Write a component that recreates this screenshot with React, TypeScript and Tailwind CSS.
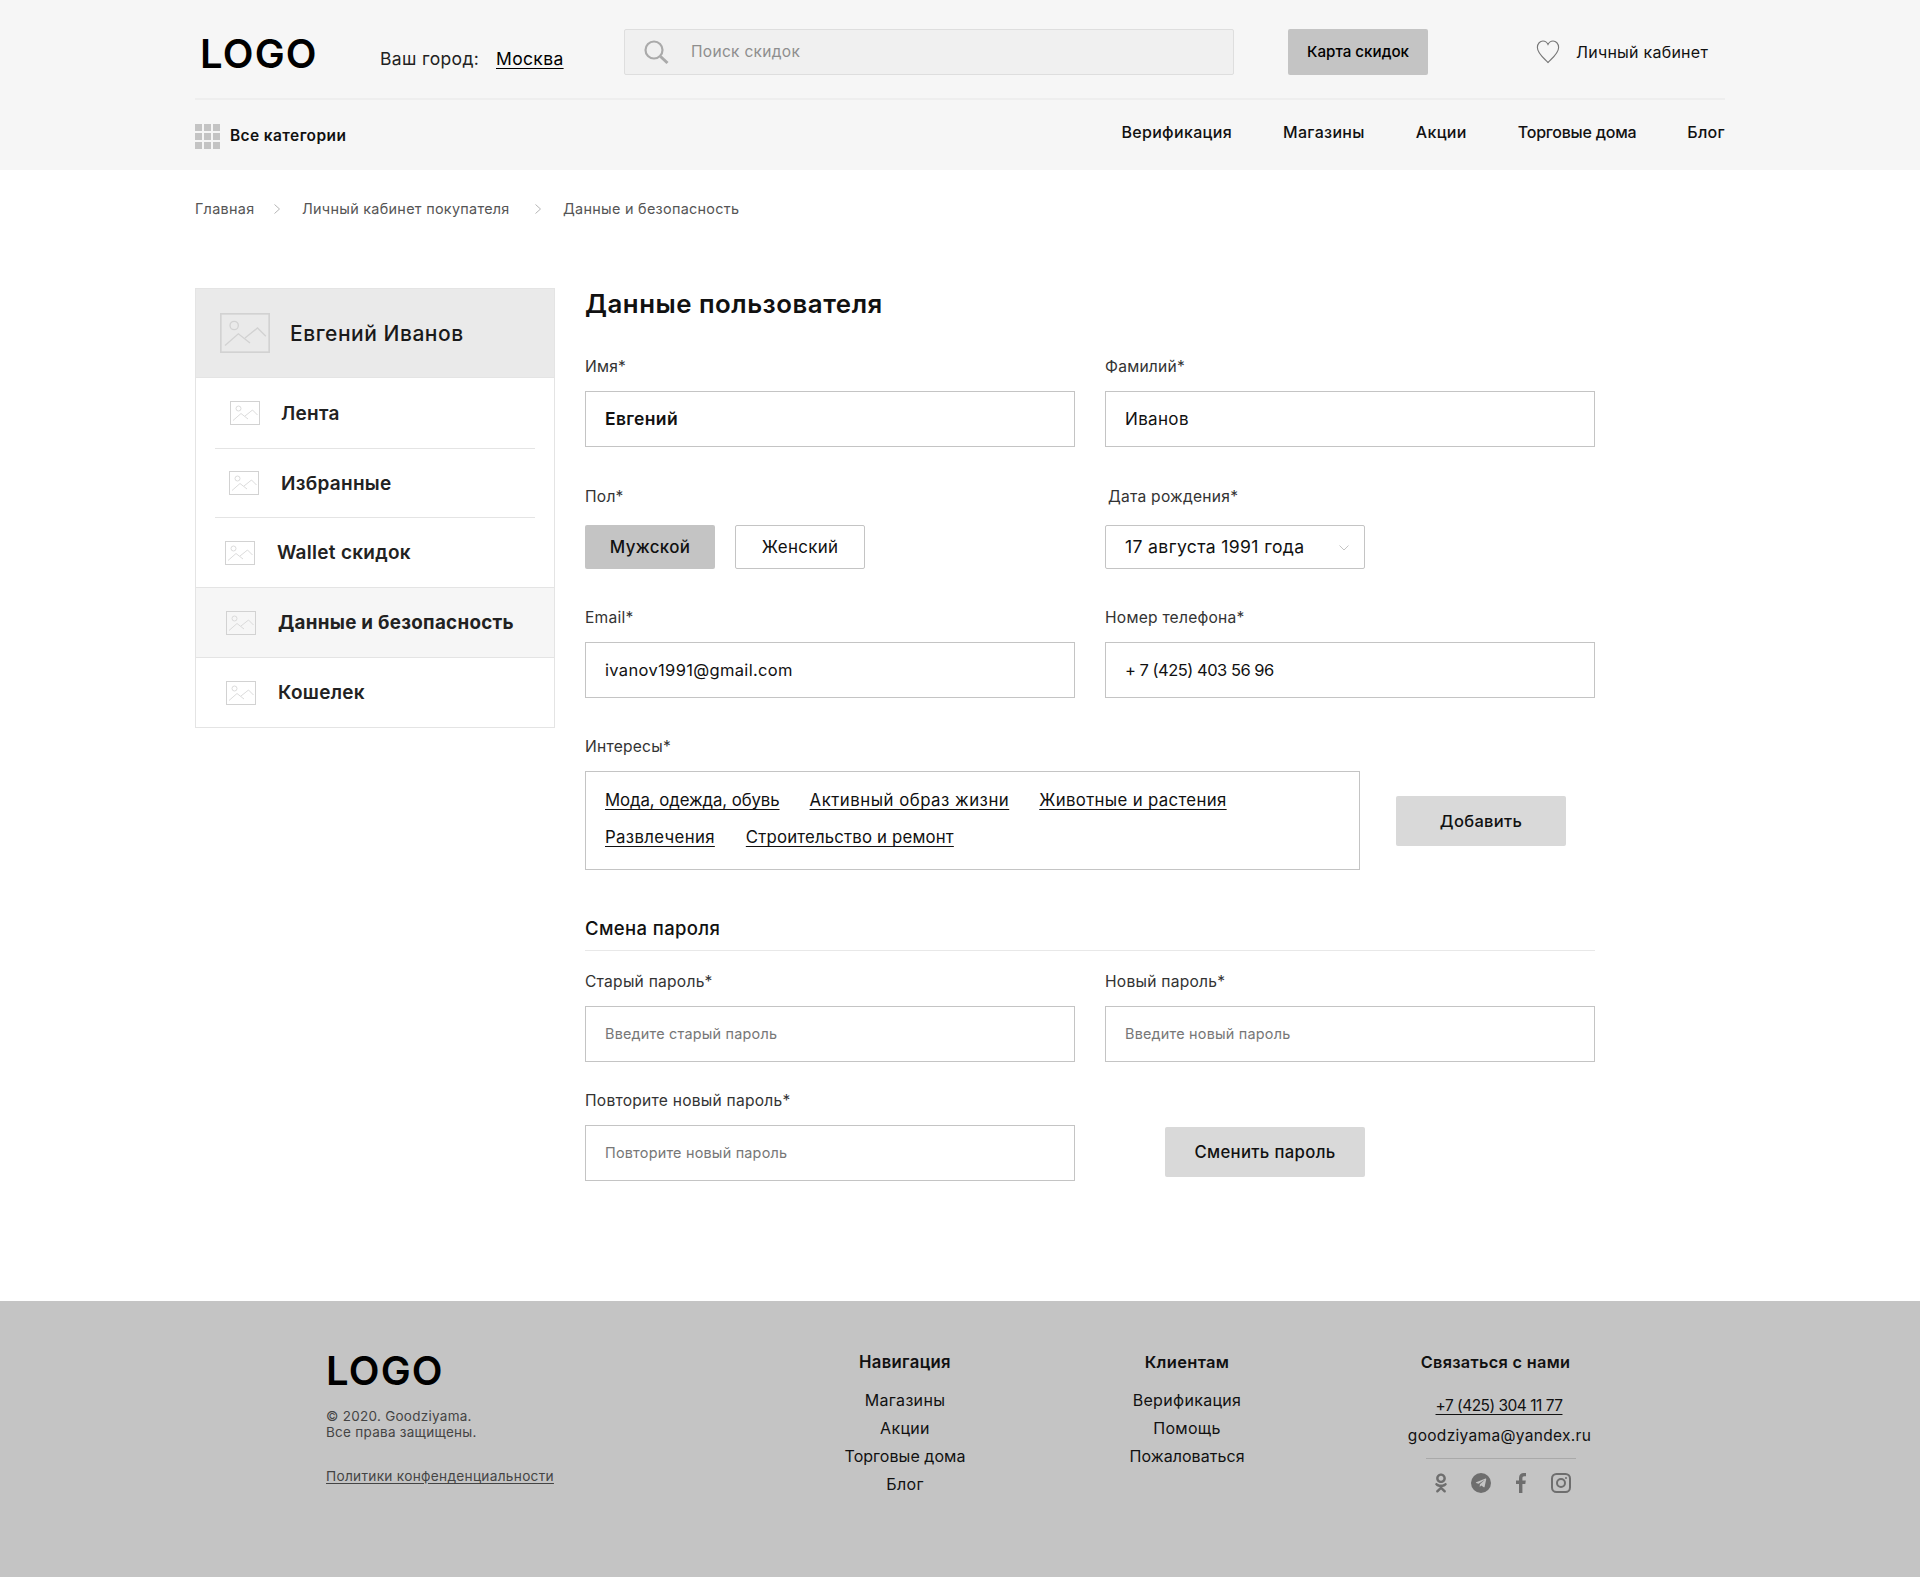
import React from "react";
import { FaOdnoklassniki, FaTelegramPlane } from "react-icons/fa";

function Placeholder({ className }: { className: string }) {
  return (
    <svg viewBox="0 0 30 24" className={className} fill="none" preserveAspectRatio="none">
      <rect x="0.5" y="0.5" width="29" height="23" stroke="#d2d2d2" />
      <circle cx="8.5" cy="7.5" r="2.5" stroke="#d2d2d2" strokeWidth="0.8" />
      <path d="M3 19.5 L11 12.5 L18 18 M15 15 L22.5 9 L27.5 14" stroke="#d2d2d2" strokeWidth="0.8" />
    </svg>
  );
}

function Label({ children, className = "" }: { children: React.ReactNode; className?: string }) {
  return <div className={`h-[20px] text-[15.6px] leading-[20px] tracking-[0.015em] text-[#333] ${className}`}>{children}</div>;
}

function Box({ children, className = "" }: { children: React.ReactNode; className?: string }) {
  return <div className={`flex h-[56px] w-[490px] items-center border border-[#c4c4c4] pl-[19px] ${className}`}>{children}</div>;
}

function SideItem({ label, itemClass, textClass }: { label: string; itemClass: string; textClass: string }) {
  return (
    <div className={`flex items-center ${itemClass}`}>
      <Placeholder className="h-[24px] w-[30px] shrink-0" />
      <span className={`leading-none tracking-[0.015em] text-[#222] ${textClass}`}>{label}</span>
    </div>
  );
}

function Tag({ children, className = "tracking-[0.02em]" }: { children: React.ReactNode; className?: string }) {
  return <span className={`text-[16.8px] leading-[20px] text-[#111] underline underline-offset-[3px] ${className}`}>{children}</span>;
}

function Chevron() {
  return (
    <svg width="6" height="10" viewBox="0 0 6 10" fill="none" className="mx-[22px]">
      <path d="M0.5 0.5 L5.5 5 L0.5 9.5" stroke="#b5b5b5" />
    </svg>
  );
}

export default function App() {
  return (
    <div className="min-h-[1577px] bg-white font-['Inter','Liberation_Sans',sans-serif] text-black">
      <header className="h-[170px] bg-[#f6f6f6]">
        <div className="mx-auto w-[1530px]">
          <div className="flex h-[98px] items-start pt-[29px]">
            <div className="ml-[5px] mt-[2px] w-[119px] whitespace-nowrap text-[40px] font-semibold leading-[46px] tracking-[0.03em]">LOGO</div>
            <div className="ml-[61px] mt-[7px] flex w-[184px] items-center text-[17.5px] leading-[46px] tracking-[0.02em] text-[#222]">
              <span className="w-[116px]">Ваш город:</span>
              <span className="text-black underline underline-offset-[3px]">Москва</span>
            </div>
            <div className="ml-[60px] flex h-[46px] w-[610px] items-center rounded-[2px] border border-[#dedede] bg-[#f0f0f0] pl-[19px]">
              <svg width="25" height="25" viewBox="0 0 25 25" fill="none" className="shrink-0">
                <circle cx="10" cy="10" r="8.5" stroke="#aaaaaa" strokeWidth="2.2" />
                <path d="M16.5 16.5 L23.5 23" stroke="#aaaaaa" strokeWidth="3" />
              </svg>
              <span className="ml-[22px] text-[15.5px] tracking-[0.02em] text-[#8e8e8e]">Поиск скидок</span>
            </div>
            <div className="ml-[54px] flex h-[46px] w-[140px] items-center justify-center rounded-[2px] bg-[#c4c4c4] pt-[1px] text-[15.2px] font-medium text-black">Карта скидок</div>
            <svg width="24" height="24" viewBox="0 0 26 24" fill="none" className="ml-[108px] mt-[11px]" preserveAspectRatio="none">
              <path d="M13 22.5 C9 18.5 1.5 13.5 1.5 7.5 C1.5 3.5 4.5 1 7.5 1 C10 1 12 2.5 13 4.5 C14 2.5 16 1 18.5 1 C21.5 1 24.5 3.5 24.5 7.5 C24.5 13.5 17 18.5 13 22.5 Z" stroke="#777" strokeWidth="1.2" />
            </svg>
            <span className="ml-[16px] text-[16px] leading-[46px] tracking-[0.015em] text-[#111]">Личный кабинет</span>
          </div>
          <div className="h-[2px] bg-[#eeeeee]" />
          <div className="flex h-[70px] items-start justify-between">
            <div className="mt-[24px] flex items-center">
              <div className="grid w-[25px] grid-cols-3 gap-[2px]">
                {Array.from({ length: 9 }).map((_, i) => (
                  <div key={i} className="h-[7px] w-[7px] bg-[#c4c4c4]" />
                ))}
              </div>
              <span className="ml-[10px] -mt-[1px] text-[15.5px] font-semibold tracking-[0.025em] text-[#111]">Все категории</span>
            </div>
            <nav className="mt-[20px] flex gap-[51px] text-[16px] font-medium leading-[24px] tracking-[0.02em] text-[#111]">
              <span>Верификация</span>
              <span>Магазины</span>
              <span>Акции</span>
              <span className="tracking-[-0.015em]">Торговые дома</span>
              <span>Блог</span>
            </nav>
          </div>
        </div>
      </header>

      <main className="mx-auto w-[1530px] pb-[120px]">
        <div className="flex h-[118px] items-start whitespace-nowrap pt-[29px] text-[14.4px] leading-[20px] tracking-[0.02em] text-[#555]">
          <span className="w-[57px]">Главная</span>
          <div className="flex h-[20px] items-center"><Chevron /></div>
          <span className="w-[211px]">Личный кабинет покупателя</span>
          <div className="flex h-[20px] items-center"><Chevron /></div>
          <span>Данные и безопасность</span>
        </div>

        <div className="flex">
          <aside className="h-[440px] w-[360px] shrink-0 border border-[#e4e4e4]">
            <div className="flex h-[89px] items-center border-b border-[#e4e4e4] bg-[#eaeaea] pl-[24px]">
              <Placeholder className="h-[40px] w-[50px]" />
              <span className="ml-[20px] mt-[1px] text-[21px] font-medium tracking-[0.025em] text-[#1a1a1a]">Евгений Иванов</span>
            </div>
            <div className="mx-[19px] border-b border-[#e4e4e4]">
              <SideItem label="Лента" itemClass="h-[70px] pl-[15px]" textClass="ml-[21px] text-[19px] font-semibold" />
            </div>
            <div className="mx-[19px] border-b border-[#e4e4e4]">
              <SideItem label="Избранные" itemClass="h-[68px] pl-[14px]" textClass="ml-[22px] text-[19px] font-semibold" />
            </div>
            <SideItem label="Wallet скидок" itemClass="h-[70px] border-b border-[#e4e4e4] pl-[29px]" textClass="ml-[22px] text-[19px] font-semibold" />
            <SideItem label="Данные и безопасность" itemClass="h-[70px] border-b border-[#e4e4e4] bg-[#f6f6f6] pl-[30px]" textClass="ml-[22px] mt-[1px] text-[18.8px] font-bold" />
            <SideItem label="Кошелек" itemClass="h-[69px] pl-[30px]" textClass="ml-[22px] text-[19px] font-semibold" />
          </aside>

          <section className="ml-[30px] w-[1010px]">
            <h1 className="h-[30px] text-[25.8px] font-semibold leading-[32px] tracking-[0.02em] text-[#111]">Данные пользователя</h1>

            <div className="mt-[39px] grid grid-cols-[490px_490px] gap-x-[30px]">
              <div>
                <Label>Имя*</Label>
                <Box className="mt-[14px] pt-[1px] text-[17.5px] font-semibold tracking-[0.02em] text-[#111]">Евгений</Box>
              </div>
              <div>
                <Label>Фамилий*</Label>
                <Box className="mt-[14px] pt-[1px] text-[17px] tracking-[0.02em] text-[#111]">Иванов</Box>
              </div>
            </div>

            <div className="mt-[40px] grid grid-cols-[490px_490px] gap-x-[30px]">
              <div>
                <Label>Пол*</Label>
                <div className="mt-[18px] flex gap-[20px] text-[16.9px] tracking-[0.02em]">
                  <div className="flex h-[44px] w-[130px] items-center justify-center rounded-[2px] bg-[#c4c4c4] pt-[1px] font-medium text-[#111]">Мужской</div>
                  <div className="flex h-[44px] w-[130px] items-center justify-center rounded-[2px] border border-[#c4c4c4] pt-[1px] text-[#111]">Женский</div>
                </div>
              </div>
              <div>
                <Label className="pl-[3px]">Дата рождения*</Label>
                <div className="mt-[18px] flex h-[44px] w-[260px] items-center justify-between rounded-[2px] border border-[#c4c4c4] pl-[19px] pr-[15px] pt-[1px] text-[17.6px] tracking-[0.02em] text-[#111]">
                  <span>17 августа 1991 года</span>
                  <svg width="10" height="6" viewBox="0 0 10 6" fill="none"><path d="M0.5 0.5 L5 5 L9.5 0.5" stroke="#c4c4c4" /></svg>
                </div>
              </div>
            </div>

            <div className="mt-[39px] grid grid-cols-[490px_490px] gap-x-[30px]">
              <div>
                <Label>Email*</Label>
                <Box className="mt-[14px] text-[16.5px] tracking-[0.02em] text-[#111]">ivanov1991@gmail.com</Box>
              </div>
              <div>
                <Label>Номер телефона*</Label>
                <Box className="mt-[14px] text-[16.5px] tracking-[-0.03em] text-[#111]">+ 7 (425) 403 56 96</Box>
              </div>
            </div>

            <Label className="mt-[39px]">Интересы*</Label>
            <div className="mt-[14px] flex items-center">
              <div className="h-[99px] w-[775px] border border-[#c4c4c4] px-[19px] pt-[18px]">
                <div className="flex gap-[30px]">
                  <Tag className="tracking-[-0.005em]">Мода, одежда, обувь</Tag>
                  <Tag className="tracking-[0.03em]">Активный образ жизни</Tag>
                  <Tag>Животные и растения</Tag>
                </div>
                <div className="mt-[17px] flex gap-[31px]">
                  <Tag>Развлечения</Tag>
                  <Tag className="tracking-[0.01em]">Строительство и ремонт</Tag>
                </div>
              </div>
              <div className="ml-[36px] flex h-[50px] w-[170px] items-center justify-center rounded-[2px] bg-[#d9d9d9] pt-[1px] text-[16.5px] font-medium tracking-[0.02em] text-[#111]">Добавить</div>
            </div>

            <div className="mt-[46px] h-[35px] border-b border-[#e8e8e8] text-[18.5px] font-medium leading-[24px] tracking-[0.02em] text-[#111]">Смена пароля</div>

            <div className="mt-[21px] grid grid-cols-[490px_490px] gap-x-[30px]">
              <div>
                <Label>Старый пароль*</Label>
                <Box className="mt-[14px] text-[14.4px] tracking-[0.015em] text-[#777]">Введите старый пароль</Box>
              </div>
              <div>
                <Label>Новый пароль*</Label>
                <Box className="mt-[14px] text-[14.4px] tracking-[0.015em] text-[#777]">Введите новый пароль</Box>
              </div>
            </div>

            <div className="mt-[29px] grid grid-cols-[490px_490px] gap-x-[30px]">
              <div>
                <Label>Повторите новый пароль*</Label>
                <Box className="mt-[14px] text-[14.4px] tracking-[0.015em] text-[#777]">Повторите новый пароль</Box>
              </div>
              <div className="pt-[36px]">
                <div className="ml-[60px] flex h-[50px] w-[200px] items-center justify-center rounded-[2px] bg-[#d9d9d9] pt-[1px] text-[16.7px] font-medium tracking-[0.02em] text-[#111]">Сменить пароль</div>
              </div>
            </div>
          </section>
        </div>
      </main>

      <footer className="flex h-[276px] bg-[#c4c4c4] pl-[326px] pt-[47px]">
        <div className="w-[479px] shrink-0">
          <div className="whitespace-nowrap text-[40px] font-semibold leading-[46px] tracking-[0.03em]">LOGO</div>
          <div className="mt-[14px] text-[13.5px] leading-[16px] tracking-[0.02em] text-[#444]">
            <div>© 2020. Goodziyama.</div>
            <div>Все права защищены.</div>
          </div>
          <div className="mt-[27px] text-[13.7px] leading-[18px] tracking-[0.02em] text-[#444] underline underline-offset-2">Политики конфенденциальности</div>
        </div>
        <div className="w-[200px] shrink-0 text-center text-[16px] leading-[28px] tracking-[0.02em] text-[#111]">
          <div className="text-[16.7px] font-semibold">Навигация</div>
          <div className="mt-[10px]">Магазины</div>
          <div>Акции</div>
          <div className="tracking-[0.003em]">Торговые дома</div>
          <div>Блог</div>
        </div>
        <div className="ml-[81px] w-[200px] shrink-0 pl-[2px] text-center text-[16px] leading-[28px] tracking-[0.02em] text-[#111]">
          <div className="text-[16.5px] font-semibold">Клиентам</div>
          <div className="mt-[10px]">Верификация</div>
          <div>Помощь</div>
          <div className="tracking-[0.003em]">Пожаловаться</div>
        </div>
        <div className="ml-[111px] w-[200px] shrink-0 text-center text-[15.5px] tracking-[0.02em] text-[#111]">
          <div className="pr-[3px] text-[16.3px] font-semibold leading-[28px]">Связаться с нами</div>
          <div className="mt-[18px] pl-[4px] leading-[24px] tracking-[-0.033em] underline underline-offset-[3px]">+7 (425) 304 11 77</div>
          <div className="mt-[6px] pl-[5px] leading-[24px]">goodziyama@yandex.ru</div>
          <div className="ml-[29px] mt-[10px] w-[150px] border-t border-[#a9a9a9]" />
          <div className="ml-[38px] mt-[14px] flex items-center text-[#6e6e6e]">
            <FaOdnoklassniki className="h-[20px] w-[12px]" />
            <span className="ml-[24px] flex h-[20px] w-[20px] items-center justify-center rounded-full bg-[#6e6e6e]">
              <FaTelegramPlane className="h-[12px] w-[12px] text-[#c4c4c4]" />
            </span>
            <svg width="10" height="20" viewBox="0 0 10 20" fill="#6e6e6e" className="ml-[25px]">
              <path d="M3 20V11H0V7.5H3V5C3 1.8 5 0 7.8 0C9 0 10 .1 10 .1V3.2H8.4C6.9 3.2 6.4 4.1 6.4 5.1V7.5H9.8L9.3 11H6.4V20Z" />
            </svg>
            <svg width="20" height="20" viewBox="0 0 20 20" fill="none" className="ml-[25px]">
              <rect x="1" y="1" width="18" height="18" rx="4.5" stroke="#6e6e6e" strokeWidth="2" />
              <circle cx="10" cy="10" r="4" stroke="#6e6e6e" strokeWidth="2" />
              <circle cx="15" cy="5" r="1" fill="#6e6e6e" />
            </svg>
          </div>
        </div>
      </footer>
    </div>
  );
}
